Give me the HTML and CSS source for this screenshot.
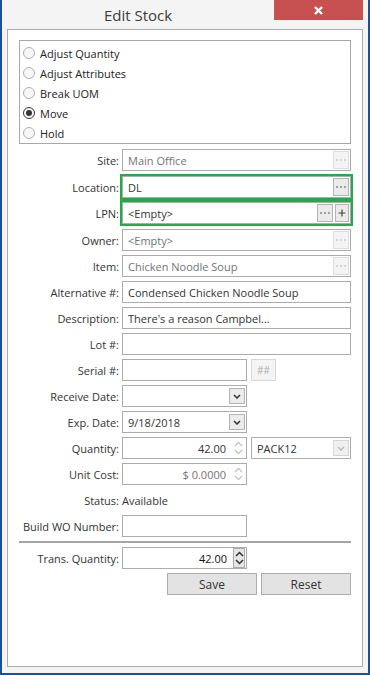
FILE: index.html
```html
<!DOCTYPE html>
<html lang="en">
<head>
    <meta charset="UTF-8">
    <title>Edit Stock</title>
    <link rel="stylesheet" href="styles.css">
</head>
<body>
    <div class="window">
        <div class="titlebar">
            <div class="title">Edit Stock</div>
            <div class="close">
                <svg width="9" height="9" viewBox="0 0 9 9"><path d="M1 1L8 8M8 1L1 8" stroke="#fff" stroke-width="2.4"/></svg>
            </div>
        </div>

        <div class="panel">
            <div class="radio-box">
                <div class="radio"><span class="dot"></span>Adjust Quantity</div>
                <div class="radio"><span class="dot"></span>Adjust Attributes</div>
                <div class="radio"><span class="dot"></span>Break UOM</div>
                <div class="radio"><span class="dot checked"></span>Move</div>
                <div class="radio"><span class="dot"></span>Hold</div>
            </div>

            <div class="form">
                <div class="row">
                    <label>Site:</label>
                    <div class="field disabled"><span class="value">Main Office</span>
                        <span class="btn-ell off"><svg width="10" height="2"><rect x="0" width="2" height="2"/><rect x="4" width="2" height="2"/><rect x="8" width="2" height="2"/></svg></span>
                    </div>
                </div>
                <div class="row loose">
                    <label>Location:</label>
                    <div class="field marked"><span class="value">DL</span>
                        <span class="btn-ell"><svg width="10" height="2"><rect x="0" width="2" height="2"/><rect x="4" width="2" height="2"/><rect x="8" width="2" height="2"/></svg></span>
                    </div>
                </div>
                <div class="row">
                    <label>LPN:</label>
                    <div class="field marked"><span class="value">&lt;Empty&gt;</span>
                        <span class="btn-ell"><svg width="10" height="2"><rect x="0" width="2" height="2"/><rect x="4" width="2" height="2"/><rect x="8" width="2" height="2"/></svg></span>
                        <span class="btn-plus"><svg width="8" height="8"><path d="M4 0.5V7.5M0.5 4H7.5" stroke="#444" stroke-width="1.2"/></svg></span>
                    </div>
                </div>
                <div class="row loose">
                    <label>Owner:</label>
                    <div class="field disabled"><span class="value">&lt;Empty&gt;</span>
                        <span class="btn-ell off"><svg width="10" height="2"><rect x="0" width="2" height="2"/><rect x="4" width="2" height="2"/><rect x="8" width="2" height="2"/></svg></span>
                    </div>
                </div>
                <div class="row">
                    <label>Item:</label>
                    <div class="field disabled"><span class="value">Chicken Noodle Soup</span>
                        <span class="btn-ell off"><svg width="10" height="2"><rect x="0" width="2" height="2"/><rect x="4" width="2" height="2"/><rect x="8" width="2" height="2"/></svg></span>
                    </div>
                </div>
                <div class="row">
                    <label>Alternative #:</label>
                    <div class="field"><span class="value">Condensed Chicken Noodle Soup</span></div>
                </div>
                <div class="row">
                    <label>Description:</label>
                    <div class="field"><span class="value">There's a reason Campbel...</span></div>
                </div>
                <div class="row">
                    <label>Lot #:</label>
                    <div class="field"></div>
                </div>
                <div class="row">
                    <label>Serial #:</label>
                    <div class="pair">
                        <div class="field short"></div>
                        <span class="btn-hash">##</span>
                    </div>
                </div>
                <div class="row">
                    <label>Receive Date:</label>
                    <div class="field short"><span class="value"></span>
                        <span class="btn-drop"><svg width="8" height="5"><path d="M1 1L4 4L7 1" fill="none" stroke="#333" stroke-width="1.5"/></svg></span>
                    </div>
                </div>
                <div class="row">
                    <label>Exp. Date:</label>
                    <div class="field short"><span class="value">9/18/2018</span>
                        <span class="btn-drop"><svg width="8" height="5"><path d="M1 1L4 4L7 1" fill="none" stroke="#333" stroke-width="1.5"/></svg></span>
                    </div>
                </div>
                <div class="row">
                    <label>Quantity:</label>
                    <div class="pair">
                        <div class="field short num"><span class="value">42.00</span>
                            <span class="spin off"><svg width="9" height="16"><path d="M1 6L4.5 2.5L8 6M1 10L4.5 13.5L8 10" fill="none" stroke="#c4c4c4" stroke-width="1.3"/></svg></span>
                        </div>
                        <div class="field combo"><span class="value">PACK12</span>
                            <span class="btn-drop off"><svg width="8" height="5"><path d="M1 1L4 4L7 1" fill="none" stroke="#bbb" stroke-width="1.5"/></svg></span>
                        </div>
                    </div>
                </div>
                <div class="row">
                    <label>Unit Cost:</label>
                    <div class="field short num disabled"><span class="value">$ 0.0000</span>
                        <span class="spin off"><svg width="9" height="16"><path d="M1 6L4.5 2.5L8 6M1 10L4.5 13.5L8 10" fill="none" stroke="#c4c4c4" stroke-width="1.3"/></svg></span>
                    </div>
                </div>
                <div class="row">
                    <label>Status:</label>
                    <div class="plain">Available</div>
                </div>
                <div class="row">
                    <label>Build WO Number:</label>
                    <div class="field short"></div>
                </div>
                <div class="divider"></div>
                <div class="row">
                    <label>Trans. Quantity:</label>
                    <div class="field short num strong"><span class="value">42.00</span>
                        <span class="spin boxed"><svg width="9" height="16"><path d="M1 6L4.5 2.5L8 6M1 10L4.5 13.5L8 10" fill="none" stroke="#333" stroke-width="1.5"/></svg></span>
                    </div>
                </div>
                <div class="actions">
                    <button>Save</button>
                    <button>Reset</button>
                </div>
            </div>
        </div>
    </div>
</body>
</html>
```

FILE: styles.css
```css
* {
    box-sizing: border-box;
}

body {
    margin: 0;
    font-family: "Segoe UI", "Open Sans", sans-serif;
    font-size: 11px;
    color: #333;
    background-color: #f4f4f4;
}

.window {
    width: 370px;
    height: 675px;
    border: 2px solid #1f4f98;
    border-top: 0;
    background-color: #f4f4f4;
    display: flex;
    flex-direction: column;
}

.titlebar {
    height: 29px;
    display: flex;
    align-items: flex-start;
}

.title {
    flex: 1;
    text-align: center;
    font-size: 15px;
    line-height: 18px;
    padding-top: 6px;
    color: #3c3c3c;
}

.close {
    width: 89px;
    height: 20px;
    margin-right: 5px;
    background-color: #c75050;
    display: flex;
    align-items: center;
    justify-content: center;
}

.panel {
    flex: 1;
    margin: 0 5px 6px;
    padding: 10px 11px 0;
    border: 1px solid #acacac;
    background-color: #fff;
}

/* radio group */
.radio-box {
    height: 104px;
    border: 1px solid #a8a8a8;
    padding: 2px 3px 0;
}

.radio {
    height: 20px;
    display: flex;
    align-items: center;
    gap: 5px;
    color: #222;
}

.dot {
    width: 12px;
    height: 12px;
    border: 1px solid #b0b0b0;
    border-radius: 50%;
    background-color: #f7f7f7;
    display: flex;
    align-items: center;
    justify-content: center;
}

.dot.checked {
    border-color: #333;
}

.dot.checked::after {
    content: "";
    width: 6px;
    height: 6px;
    border-radius: 50%;
    background-color: #333;
}

/* form rows */
.form {
    margin-top: 5px;
    display: flex;
    flex-direction: column;
    gap: 4px;
}

.row {
    height: 22px;
    display: grid;
    grid-template-columns: 100px 229px;
    column-gap: 3px;
    align-items: center;
}

.row.loose {
    margin-top: 1px;
}

.row label {
    text-align: right;
    white-space: nowrap;
    color: #333;
}

.field {
    height: 22px;
    border: 1px solid #acacac;
    background-color: #fff;
    padding: 0 1px 0 5px;
    display: flex;
    align-items: center;
    gap: 2px;
    color: #333;
    white-space: nowrap;
}

.field .value {
    flex: 1;
    overflow: hidden;
}

.field.disabled {
    color: #747474;
}

.field.marked {
    outline: 2px solid #25a94a;
}

.field.short {
    width: 125px;
}

.field.combo {
    width: 100px;
}

.field.num .value {
    text-align: right;
    padding-right: 4px;
}

.field.strong {
    color: #111;
}

.pair {
    display: flex;
    gap: 4px;
}

.plain {
    color: #333;
}

/* small buttons inside fields */
.btn-ell,
.btn-plus,
.btn-drop {
    height: 18px;
    border: 1px solid #b4b4b4;
    background-color: #ebebeb;
    display: flex;
    align-items: center;
    justify-content: center;
}

.btn-ell {
    width: 16px;
    fill: #a0a0a0;
}

.btn-ell.off {
    border-color: #dcdcdc;
    background-color: #f4f4f4;
    fill: #d4d4d4;
}

.btn-plus {
    width: 14px;
}

.btn-drop {
    width: 16px;
    height: 16px;
}

.btn-drop.off {
    border-color: #d5d5d5;
    background-color: #f0f0f0;
}

.spin {
    width: 13px;
    height: 20px;
    display: flex;
    align-items: center;
    justify-content: center;
}

.spin.boxed {
    width: 12px;
    border: 1px solid #acacac;
    background-color: #e6e6e6;
}

.btn-hash {
    width: 25px;
    height: 22px;
    border: 1px solid #d8d8d8;
    background-color: #f4f4f4;
    color: #b0b0b0;
    font-size: 10px;
    display: flex;
    align-items: center;
    justify-content: center;
}

.divider {
    height: 2px;
    background-color: #a5a5a5;
}

.actions {
    display: flex;
    justify-content: flex-end;
    gap: 4px;
}

.actions button {
    width: 90px;
    height: 22px;
    border: 1px solid #adadad;
    background-color: #e3e3e3;
    font-family: inherit;
    font-size: 12px;
    color: #333;
    padding: 0;
}
```
